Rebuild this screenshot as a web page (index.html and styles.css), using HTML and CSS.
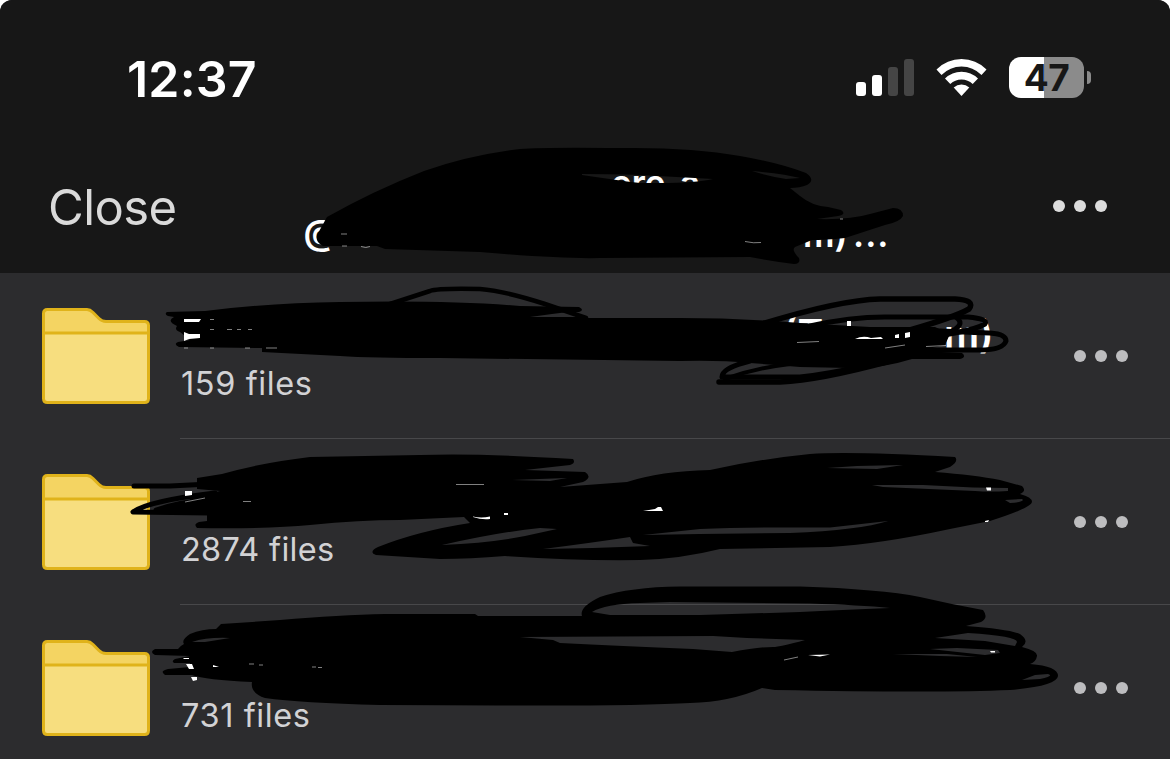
FILE: index.html
```html
<!DOCTYPE html>
<html lang="en">
<head>
<meta charset="UTF-8">
<meta name="viewport" content="width=device-width, initial-scale=1.0">
<title>Files</title>
<link rel="stylesheet" href="styles.css">
</head>
<body>
<div class="screen">
    <header>
        <div class="status-bar">
            <div class="time">12:37</div>
            <div class="status-icons">
                <svg class="signal" width="58" height="37" viewBox="0 0 58 37">
                    <rect x="0" y="23" width="10" height="14" rx="3" fill="#fff"/>
                    <rect x="16" y="16" width="10" height="21" rx="3" fill="#fff"/>
                    <rect x="32" y="8" width="10" height="29" rx="3" fill="#454545"/>
                    <rect x="48" y="0" width="10" height="37" rx="3" fill="#454545"/>
                </svg>
                <svg class="wifi" width="51" height="38" viewBox="0 0 51 38" fill="#fff">
                    <path d="M0.5 10.5 Q11 0 25.5 0 Q40 0 50.5 10.5 L45.5 16 Q37 7.5 25.5 7.5 Q14 7.5 5.5 16 Z"/>
                    <path d="M9 19.5 Q16 12.7 25.5 12.7 Q35 12.7 42 19.5 L36.7 25 Q32 20.4 25.5 20.4 Q19 20.4 14.3 25 Z"/>
                    <path d="M17.7 28.5 Q21 25.5 25.5 25.5 Q30 25.5 33.3 28.5 L25.5 37 Z"/>
                </svg>
                <div class="battery"><span>47</span></div>
                <div class="battery-tip"></div>
            </div>
        </div>
        <div class="nav-bar">
            <a class="close" href="#">Close</a>
            <div class="dots dots-light"><i></i><i></i><i></i></div>
        </div>
    </header>

    <ul class="folders">
        <li>
            <svg class="folder" viewBox="0 0 108 96">
                <path d="M1.5 25 V5.5 Q1.5 1.5 5.5 1.5 H45 Q48 1.5 51 4.5 L57 10.5 Q60 13.5 64 13.5 H102.5 Q106.5 13.5 106.5 17.5 V25 Z" fill="#f4d462"/>
                <path d="M1.5 25 H106.5 V90.5 Q106.5 94.5 102.5 94.5 H5.5 Q1.5 94.5 1.5 90.5 Z" fill="#f7de7f"/>
                <path d="M1.5 25 V5.5 Q1.5 1.5 5.5 1.5 H45 Q48 1.5 51 4.5 L57 10.5 Q60 13.5 64 13.5 H102.5 Q106.5 13.5 106.5 17.5 V90.5 Q106.5 94.5 102.5 94.5 H5.5 Q1.5 94.5 1.5 90.5 Z M1.5 25 H106.5" fill="none" stroke="#e0b31a" stroke-width="3"/>
            </svg>
            <div class="info">
                <p>159 files</p>
                <div class="dots"><i></i><i></i><i></i></div>
            </div>
        </li>
        <li>
            <svg class="folder" viewBox="0 0 108 96">
                <path d="M1.5 25 V5.5 Q1.5 1.5 5.5 1.5 H45 Q48 1.5 51 4.5 L57 10.5 Q60 13.5 64 13.5 H102.5 Q106.5 13.5 106.5 17.5 V25 Z" fill="#f4d462"/>
                <path d="M1.5 25 H106.5 V90.5 Q106.5 94.5 102.5 94.5 H5.5 Q1.5 94.5 1.5 90.5 Z" fill="#f7de7f"/>
                <path d="M1.5 25 V5.5 Q1.5 1.5 5.5 1.5 H45 Q48 1.5 51 4.5 L57 10.5 Q60 13.5 64 13.5 H102.5 Q106.5 13.5 106.5 17.5 V90.5 Q106.5 94.5 102.5 94.5 H5.5 Q1.5 94.5 1.5 90.5 Z M1.5 25 H106.5" fill="none" stroke="#e0b31a" stroke-width="3"/>
            </svg>
            <div class="info">
                <p class="count-wide">2874 files</p>
                <div class="dots"><i></i><i></i><i></i></div>
            </div>
        </li>
        <li>
            <svg class="folder" viewBox="0 0 108 96">
                <path d="M1.5 25 V5.5 Q1.5 1.5 5.5 1.5 H45 Q48 1.5 51 4.5 L57 10.5 Q60 13.5 64 13.5 H102.5 Q106.5 13.5 106.5 17.5 V25 Z" fill="#f4d462"/>
                <path d="M1.5 25 H106.5 V90.5 Q106.5 94.5 102.5 94.5 H5.5 Q1.5 94.5 1.5 90.5 Z" fill="#f7de7f"/>
                <path d="M1.5 25 V5.5 Q1.5 1.5 5.5 1.5 H45 Q48 1.5 51 4.5 L57 10.5 Q60 13.5 64 13.5 H102.5 Q106.5 13.5 106.5 17.5 V90.5 Q106.5 94.5 102.5 94.5 H5.5 Q1.5 94.5 1.5 90.5 Z M1.5 25 H106.5" fill="none" stroke="#e0b31a" stroke-width="3"/>
            </svg>
            <div class="info">
                <p>731 files</p>
                <div class="dots"><i></i><i></i><i></i></div>
            </div>
        </li>
    </ul>

    <!-- pen marks drawn over the names -->
    <svg class="marks" width="1170" height="759" viewBox="0 0 1170 759">
        <g class="title-text">
            <text x="611" y="195">ere</text>
            <text x="680" y="195">a</text>
            <text x="303.500" y="245">@</text>
            <text x="803" y="247">m)</text>
            <text x="853" y="247" letter-spacing="1">...</text>
        </g>
        <g class="name-text">
            <text x="783" y="348">(T</text>
            <text x="944" y="348">m)</text>
        </g>

        <g class="ink">
            <!-- title -->
            <path d="M327 217 Q373 191 424 171 Q470 155 520 149 Q545 147 620 148 Q690 147 740 156 Q780 163 806 173 Q816 180 807 185 Q800 188 790 188 L800 196 Q812 206 828 207 L841 210 Q847 214 838 216 L817 219 Q850 220 870 214 L893 208 Q903 208 903 216 Q900 222 885 225 L845 238 Q825 240 812 240 L795 247 Q791 250 799 258 Q801 264 794 264 Q770 261 750 257 L600 258 Q560 259 480 252 L385 249 L377 246 L323 246 Q315 242 317 235 Z
                M582 174 Q620 174 640 175 L713 179 Q695 183 660 183 L640 183 Q615 180 582 175 Z
                M752 171 Q785 174 800 178 L786 179 Q768 176 752 171 Z"/>

            <!-- first folder -->
            <path d="M167 312 L205 311 Q270 303 340 302 Q450 300 520 306 L579 307 Q585 310 579 312 L568 312 L588 318 L680 318 Q740 318 800 323 L870 327 L935 327 L950 334 L945 345 L920 351 L962 353 Q967 357 960 359 L912 359 Q880 369 850 368 L800 367 L750 363 Q720 360 680 361 L440 358 Q370 358 340 356 L262 352 L262 348 L179 347 Q173 344 178 342 L190 340 L180 332 Q174 330 177 326 Q166 321 174 317 L168 316 Q164 314 167 312 Z
                M530 317 L552 314 L568 312 L586 317 Z"/>
            <g class="pen">
                <path d="M390 304 L430 291 Q438 288 480 289 Q505 291 545 304 L586 318" stroke-width="4.500"/>
                <path d="M762 324 Q840 300 880 299 L955 299 Q976 300 969 309 Q955 317 910 330" stroke-width="5.500"/>
                <path d="M810 326 Q850 317 885 317 L968 317 Q989 319 985 324 Q970 333 900 341" stroke-width="5"/>
                <path d="M957 318 Q966 325 948 333 L880 346" stroke-width="5"/>
                <path d="M920 330 Q960 332 990 333 Q1006 334 1006 341 Q1003 350 980 350 L910 350" stroke-width="5"/>
                <path d="M750 361 Q722 368 722 377 L800 377 Q860 370 910 351" stroke-width="5"/>
                <path d="M719 382 L780 382 Q820 380 890 361" stroke-width="5.500"/>
                <path d="M725 379 Q755 368 790 364" stroke-width="4"/>
            </g>

            <!-- second folder -->
            <path d="M197 478 L222 474 Q260 463 310 457 L420 455 Q480 453 573 459 Q576 463 570 465 L525 470 L585 472 Q593 477 583 482 L560 487 L627 482 Q660 471 710 470 Q760 459 810 454 Q850 451 955 457 Q959 461 950 467 L935 472 Q975 475 1000 480 L1022 486 Q1027 491 1020 494 Q1032 497 1032 502 Q1031 508 990 521 L950 529 Q880 544 830 547 L720 549 Q680 559 640 560 Q580 561 505 556 Q470 559 440 559 L376 555 Q368 552 378 547 Q418 531 470 523 L464 517 L400 520 Q360 520 310 525 Q270 529 197 528 Q193 524 199 522 L207 521 L207 515 L190 514 L190 498 L220 491 L197 489 Z
                M512 480 L567 478 L550 481 Z
                M442 545 Q500 532 540 528 L557 529 L525 536 Q490 543 442 545 Z
                M543 549 Q590 543 630 537 L633 543 L650 546 L593 548 Z
                M643 535 L700 529 Q750 527 830 527.5 L888 521 Q860 530 790 533 L700 534 Z
                M827 468 L857 466 L903 465 L877 469 Z
                M872 485 L923 485 L973 487.5 L1008 488 L1008 491 Q990 492 975 491 L883 487 Z
                M1005 500 L1022 499 Q1026 502 1010 503 Z"/>
            <g class="pen">
                <path d="M134 486 L170 486 L210 484" stroke-width="5"/>
                <path d="M215 493 Q148 501 133 512 L210 513" stroke-width="5"/>
                <path d="M156 510 Q180 502 205 500 L205 512 Z" stroke-width="5" class="solid"/>
            </g>

            <!-- third folder -->
            <path d="M221 624 L280 620 Q340 615 385 614 L475 614 L478 616 L582 616 Q579 607 600 597 Q630 587 680 586.5 L800 586.5 Q880 589 920 597 Q950 604 983 610 Q989 618 981 622 L966 626 Q1008 629 1020 634 Q1030 641 1022 647 Q1038 651 1037 656 Q1036 662 1030 664 Q1058 666 1058 676 Q1057 686 1010 690 Q940 693 775 690 L762 688 Q730 702 690 703 Q640 706 500 705.5 L380 705 Q300 703 265 698 Q250 693 252 682 Q205 680 192 675 L165 675 Q159 671 168 669 L190 667 L190 663 L174 663 Q171 661 175 659 L190 656 L155 655 Q149 652 155 649 L178 649 Q180 646 184 644 Q181 640 190 634 Q202 629 216 629 Z
                M592 612 Q605 604 640 603 L670 602 L810 603.5 Q860 605 890 608 Q840 610 800 612 L700 615 L610 615 Z
                M192 642 Q207 637 230 638 L205 642 Z
                M520 637 L713 636 L747 638 L805 640 Q780 647 773 647 Q758 647 732 652 L693 649 Q620 646 560 643 L553 640 Z
                M935 638 L968 633 Q1017 636 1017 642 L1015 646 L985 641 Z
                M930 649 L957 648 L998 650 L1000 653 L985 655 Z
                M893 654 L947 654 L977 657 L940 656 Z
                M1022 680 L1035 675 L1048 674 Q1055 676 1040 679 Z"/>
        </g>

        <!-- bits of the covered letters -->
        <g class="bits">
            <path d="M184 319 h17 l-2 3 h-15 z M184 332 l5 2 h11 v4 l-11 1 l-5 2 z"/>
            <path d="M847 321 h4 v5 h-4 z M855 339 q8 -4 16 -1 l10 -1 l2 2 z M895 335 l4 -1 v4 h-4 z M905 333 l5 -1 v5 l-5 1 z"/>
            <path d="M473 516.500 q8 2 17 0 v2.500 q-8 1 -17 -2 z M504 513 h4 v2 h-4 z M643 511 l12 -2 l3 -2 h3 l2 4 z M185 491 h7 v4 l-7 1 z M986 487.500 h5 v3 h-4 z M985 521 l4 -1 l-1 2 h-3 z"/>
            <path d="M183 658 h6 v1 h-5 z M186 664 h6 l2 5 h-5 z M191 677 h6 v3 l-4 1 z M213 665 l6 2 h-6 z M808 655 l22 -.5 l-10 2 z M990 651 h5 v1.500 h-4 z"/>
            <path class="faint" d="M341 234 h6 M342 246 h5 M361 246.5 q5 2 9 0 M745 241.5 q9 2 16 1 M840 219 h3 M184 348 h4 M210 319.5 h4 M210 348 h4 M245 348 h5 M266 348 h11 M210 329.5 h4 M227 329.5 h5 M237 329.5 h4 M248 329.5 h4"/>
            <path class="faint" d="M926 346.5 l20 -1 M797 342.5 l22 -1 M885 348 l20 -3 M185 502 l20 -4 M243 501.5 h8 M456 484.500 h28 M249 664 h5 M259 665 h4 M312 667 h4 M318 667.5 h4 M784 660 l14 -3"/>
        </g>
    </svg>
</div>
</body>
</html>
```
FILE: styles.css
```css
body {
    font-family: Inter, "Liberation Sans", sans-serif;
    margin: 0;
    background-color: #fff;
}
.screen {
    position: relative;
    height: 759px;
    overflow: hidden;
    background-color: #2c2c2e;
    border-radius: 12px 12px 0 0;
}
header {
    height: 273px;
    background-color: #171717;
    color: #fff;
}
.status-bar {
    display: flex;
    justify-content: space-between;
    align-items: center;
    height: 155px;
    padding: 0 79px 0 127px;
}
.time {
    padding-top: 2px;
    font-size: 50px;
    font-weight: 600;
    letter-spacing: 0.2px;
}
.status-icons {
    display: flex;
    align-items: center;
}
.wifi {
    margin: 0 22px;
}
.battery {
    width: 75px;
    height: 41px;
    border-radius: 12px;
    background: linear-gradient(to right, #fff 35px, #8b8b8b 35px);
    color: #171717;
    font-size: 37px;
    font-weight: 700;
    letter-spacing: -0.5px;
    line-height: 42px;
    text-align: center;
}
.battery-tip {
    width: 4px;
    height: 13px;
    margin-left: 3px;
    background-color: #8b8b8b;
    border-radius: 0 5px 5px 0;
}
.nav-bar {
    display: flex;
    justify-content: space-between;
    align-items: center;
    height: 102px;
    padding: 0 63px 0 48px;
}
.close {
    padding-top: 2px;
    color: #dadada;
    font-size: 49px;
    letter-spacing: -0.6px;
    text-decoration: none;
}
.dots {
    display: flex;
    gap: 9px;
}
.dots i {
    width: 12px;
    height: 12px;
    border-radius: 50%;
    background-color: #bdbdbf;
}
.dots-light i {
    background-color: #dcdcdc;
}
.folders {
    list-style: none;
    margin: 0;
    padding: 0;
}
.folders li {
    display: flex;
    height: 166px;
    padding-left: 42px;
}
.folder {
    width: 108px;
    height: 96px;
    margin: 35px 30px 0 0;
}
.info {
    flex: 1;
    display: flex;
    justify-content: space-between;
    align-items: center;
    padding-right: 42px;
    border-bottom: 1px solid #48484a;
}
.info p {
    margin: 55px 0 0 1px;
    color: #d2d2d4;
    font-size: 32.5px;
    letter-spacing: 0.6px;
}
.info .count-wide {
    letter-spacing: 0.3px;
}
.marks {
    position: absolute;
    top: 0;
    left: 0;
}
.title-text {
    fill: #fff;
    font-size: 35px;
    font-weight: 600;
}
.name-text {
    fill: #fff;
    font-size: 39px;
    font-weight: 600;
}
.ink {
    fill: #000;
    fill-rule: evenodd;
}
.pen {
    fill: none;
    stroke: #000;
    stroke-linecap: round;
    stroke-linejoin: round;
}
.solid {
    fill: #000;
}
.bits {
    fill: #fff;
}
.faint {
    fill: none;
    stroke: #fff;
    stroke-opacity: 0.5;
}
```
